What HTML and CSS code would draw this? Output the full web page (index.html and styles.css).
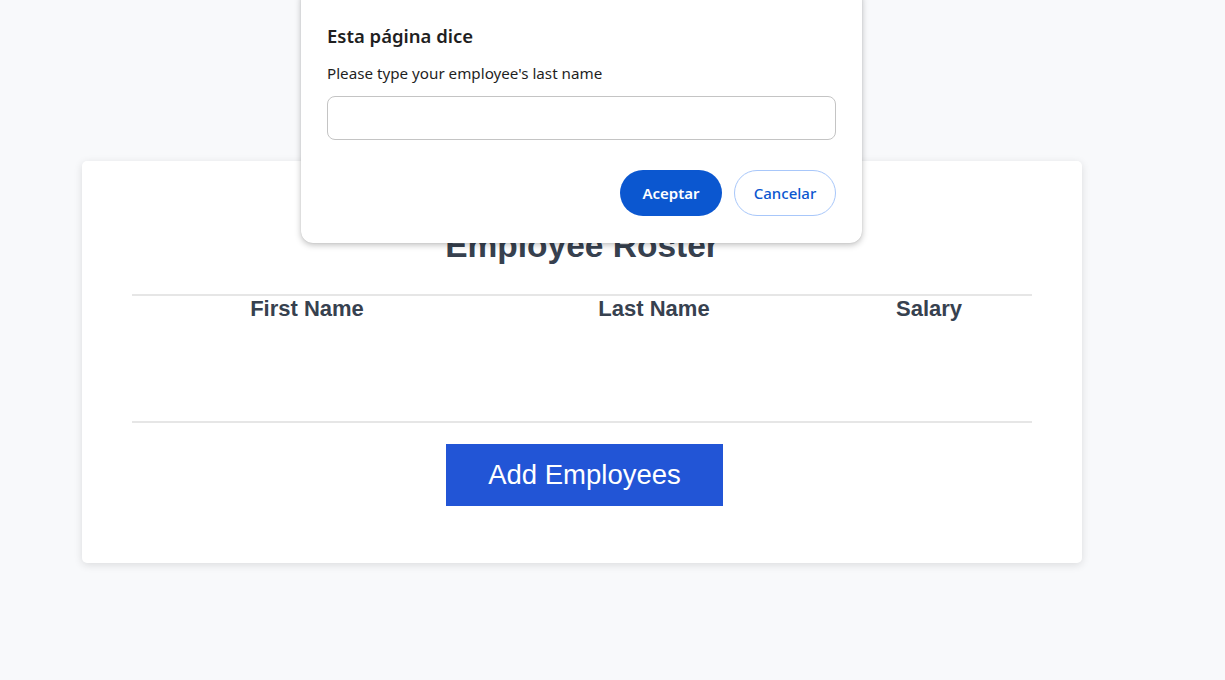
FILE: index.html
```html
<!DOCTYPE html>
<html lang="en">
<head>
<meta charset="utf-8">
<title>Employee Roster</title>
<link rel="stylesheet" href="styles.css">
</head>
<body>
<main class="page">
  <section class="card">
    <h1 class="title">Employee Roster</h1>
    <div class="table">
      <div class="thead">
        <div class="th">First Name</div>
        <div class="th">Last Name</div>
        <div class="th">Salary</div>
      </div>
      <div class="tbody"></div>
    </div>
    <div class="actions">
      <button class="add-btn" type="button">Add Employees</button>
    </div>
  </section>
</main>

<div class="dialog" role="dialog">
  <div class="dialog-title">Esta página dice</div>
  <div class="dialog-msg">Please type your employee's last name</div>
  <input class="dialog-input" type="text">
  <div class="dialog-buttons">
    <button class="btn btn-primary" type="button">Aceptar</button>
    <button class="btn btn-secondary" type="button">Cancelar</button>
  </div>
</div>
</body>
</html>
```

FILE: styles.css
```css
* { box-sizing: border-box; }
html, body { margin: 0; padding: 0; }
body {
  background: #f8f9fb;
  font-family: "Liberation Sans", Arial, sans-serif;
  width: 1225px;
  height: 680px;
  overflow: hidden;
}
.page {
  padding: 161px 0 0 82px;
}
.card {
  width: 1000px;
  background: #ffffff;
  border-radius: 5px;
  box-shadow: 0 2px 8px rgba(0,0,0,0.12);
  padding: 59px 50px 57px;
}
.title {
  margin: 0;
  height: 74px;
  font-size: 33.5px;
  font-weight: bold;
  color: #37414f;
  text-align: center;
  line-height: 52px;
}
.table {
  border-top: 2px solid #e6e6e6;
  border-bottom: 2px solid #e6e6e6;
  height: 129px;
}
.thead {
  display: grid;
  grid-template-columns: 350px 344px 206px;
}
.th {
  text-align: center;
  font-size: 22px;
  font-weight: bold;
  color: #37414f;
  line-height: 26px;
}
.actions {
  display: flex;
  justify-content: center;
  padding-top: 21px;
}
.add-btn {
  width: 277px;
  height: 62px;
  border: none;
  background: #2255d6;
  color: #ffffff;
  font-family: "Liberation Sans", Arial, sans-serif;
  font-size: 27.5px;
  padding: 0;
  margin-left: 5px;
}

.dialog {
  position: absolute;
  left: 301px;
  top: -12px;
  width: 561px;
  height: 255px;
  background: #ffffff;
  border-radius: 12px;
  box-shadow: 0 2px 6px rgba(0,0,0,0.25), 0 0 1px rgba(0,0,0,0.2);
  padding: 35px 26px 0 26px;
  font-family: "Noto Sans", "Open Sans", sans-serif;
}
.dialog-title {
  font-size: 18.5px;
  font-weight: 600;
  color: #1f1f1f;
  line-height: 26px;
}
.dialog-msg {
  margin-top: 14px;
  font-size: 15.2px;
  color: #1f1f1f;
  line-height: 20px;
}
.dialog-input {
  display: block;
  margin-top: 13px;
  width: 509px;
  height: 44px;
  border: 1px solid #c4c4c4;
  border-radius: 8px;
  outline: none;
}
.dialog-buttons {
  display: flex;
  justify-content: flex-end;
  gap: 12px;
  margin-top: 30px;
}
.btn {
  width: 102px;
  height: 46px;
  border-radius: 23px;
  font-family: "Noto Sans", "Open Sans", sans-serif;
  font-size: 15px;
  font-weight: 600;
  padding: 0;
}
.btn-primary {
  background: #0b57d0;
  color: #ffffff;
  border: none;
}
.btn-secondary {
  background: #ffffff;
  color: #0b57d0;
  border: 1px solid #a8c7fa;
  font-weight: 500;
}
```
